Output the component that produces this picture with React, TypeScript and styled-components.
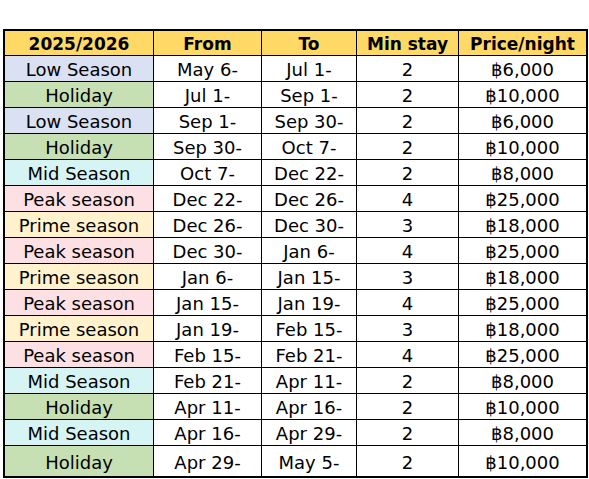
import React from "react";
import styled, { createGlobalStyle } from "styled-components";

const Global = createGlobalStyle`
  html, body { margin: 0; padding: 0; background: #ffffff; }
  body { font-family: "DejaVu Sans", "Noto Sans", sans-serif; }
`;

const Page = styled.div`
  padding: 29px 0 0 3px;
`;

const Grid = styled.div`
  display: grid;
  grid-template-columns: 149px 108px 95px 102px 127px;
  width: 581px;
  border: 2px solid #000;
  color: #000;
`;

const Cell = styled.div<{ $bg?: string; $bold?: boolean; $last?: boolean; $lastRow?: boolean; $h: number }>`
  display: flex;
  align-items: center;
  justify-content: center;
  box-sizing: border-box;
  background: ${(p) => p.$bg || "#ffffff"};
  font-weight: ${(p) => (p.$bold ? 700 : 400)};
  font-size: ${(p) => (p.$bold ? "17px" : "18px")};
  border-right: ${(p) => (p.$last ? "none" : "1px solid #000")};
  border-bottom: ${(p) => (p.$lastRow ? "none" : "1px solid #000")};
  height: ${(p) => p.$h}px;
  white-space: nowrap;
  line-height: 1;
  padding-top: ${(p) => (p.$bold ? "2px" : "3px")};
`;

const colors: Record<string, string> = {
  "Low Season": "#d9e1f2",
  Holiday: "#c6e0b4",
  "Mid Season": "#d6f4f4",
  "Peak season": "#fde0e3",
  "Prime season": "#fff2cc",
};

const rows: [string, string, string, string, string][] = [
  ["Low Season", "May 6-", "Jul 1-", "2", "฿6,000"],
  ["Holiday", "Jul 1-", "Sep 1-", "2", "฿10,000"],
  ["Low Season", "Sep 1-", "Sep 30-", "2", "฿6,000"],
  ["Holiday", "Sep 30-", "Oct 7-", "2", "฿10,000"],
  ["Mid Season", "Oct 7-", "Dec 22-", "2", "฿8,000"],
  ["Peak season", "Dec 22-", "Dec 26-", "4", "฿25,000"],
  ["Prime season", "Dec 26-", "Dec 30-", "3", "฿18,000"],
  ["Peak season", "Dec 30-", "Jan 6-", "4", "฿25,000"],
  ["Prime season", "Jan 6-", "Jan 15-", "3", "฿18,000"],
  ["Peak season", "Jan 15-", "Jan 19-", "4", "฿25,000"],
  ["Prime season", "Jan 19-", "Feb 15-", "3", "฿18,000"],
  ["Peak season", "Feb 15-", "Feb 21-", "4", "฿25,000"],
  ["Mid Season", "Feb 21-", "Apr 11-", "2", "฿8,000"],
  ["Holiday", "Apr 11-", "Apr 16-", "2", "฿10,000"],
  ["Mid Season", "Apr 16-", "Apr 29-", "2", "฿8,000"],
  ["Holiday", "Apr 29-", "May 5-", "2", "฿10,000"],
];

const headers = ["2025/2026", "From", "To", "Min stay", "Price/night"];

export default function App() {
  return (
    <Page>
      <Global />
      <Grid>
        {headers.map((h, i) => (
          <Cell key={h} $bg="#ffd966" $bold $last={i === 4} $h={25}>
            {h}
          </Cell>
        ))}
        {rows.map((r, ri) => {
          const lastRow = ri === rows.length - 1;
          return r.map((v, ci) => (
            <Cell
              key={`${ri}-${ci}`}
              $bg={ci === 0 ? colors[r[0]] : undefined}
              $last={ci === 4}
              $lastRow={lastRow}
              $h={lastRow ? 30 : 26}
            >
              {v}
            </Cell>
          ));
        })}
      </Grid>
    </Page>
  );
}
